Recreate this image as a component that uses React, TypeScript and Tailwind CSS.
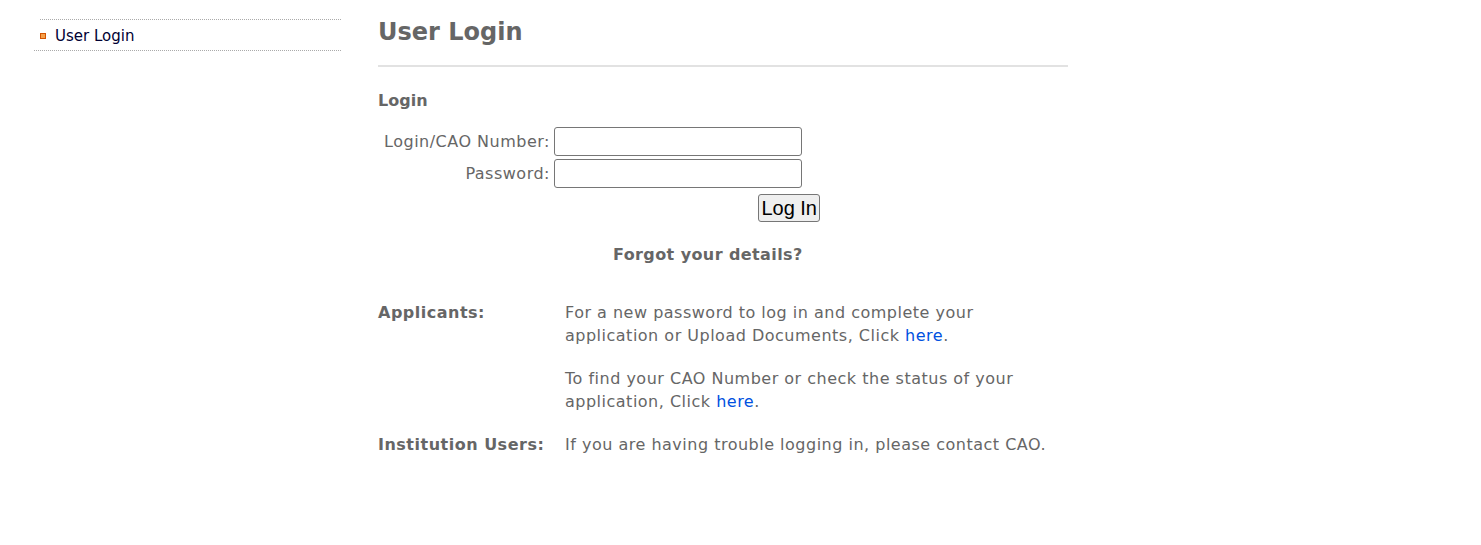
export default function App() {
  return (
    <div className="min-h-[545px] bg-white text-[#666] font-['DejaVu_Sans',sans-serif]">
      <div className="flex">
        {/* sidebar */}
        <aside className="ml-[34px] w-[307px] pt-[19px] shrink-0">
          <ul className="border-b border-dotted border-[#aaa]">
            <li className="ml-[6px] border-t border-dotted border-[#aaa] flex items-center h-[31px] pt-[2px]">
              <span className="w-[6px] h-[6px] bg-[#f5a04a] border border-[#d35400] mr-[9px]" />
              <a href="#" className="text-[15px] text-[#000033] no-underline">
                User Login
              </a>
            </li>
          </ul>
        </aside>

        {/* main */}
        <main className="ml-[37px] w-[690px] tracking-[0.5px]">
          <h1 className="pt-[16px] text-[24px] font-bold leading-[32px] pb-[17px] border-b-2 border-[#e2e2e2] tracking-normal">
            User Login
          </h1>
          <h2 className="mt-[24px] text-[16px] font-bold leading-[20px] tracking-normal">Login</h2>

          <div className="mt-[16px] grid grid-cols-[176px_auto] gap-y-[3px] w-[442px]">
            <label className="text-right pr-[4px] text-[16px] leading-[29px]">Login/CAO Number:</label>
            <input type="text" className="w-[248px] h-[29px] border border-[#767676] rounded-[3px]" />
            <label className="text-right pr-[4px] text-[16px] leading-[29px]">Password:</label>
            <input type="password" className="w-[248px] h-[29px] border border-[#767676] rounded-[3px]" />
          </div>
          <div className="flex justify-end w-[442px] mt-[6px]">
            <button className="h-[28px] px-[2px] border border-[#767676] rounded-[3px] bg-[#efefef] text-black text-[20px] leading-[24px] tracking-normal font-['Liberation_Sans',sans-serif]">
              Log In
            </button>
          </div>

          <p className="mt-[23px] pl-[235px] text-[16px] font-bold leading-[20px] tracking-[0.4px]">Forgot your details?</p>

          <div className="mt-[36px] grid grid-cols-[187px_1fr] text-[16px] leading-[23px] w-[520px]">
            <div className="font-bold">Applicants:</div>
            <div>
              <p>
                For a new password to log in and complete your application or Upload Documents, Click{" "}
                <a href="#" className="text-[#0050e0]">here</a>.
              </p>
              <p className="mt-[20px]">
                To find your CAO Number or check the status of your application, Click{" "}
                <a href="#" className="text-[#0050e0]">here</a>.
              </p>
            </div>
            <div className="font-bold mt-[20px]">Institution Users:</div>
            <div className="mt-[20px] whitespace-nowrap">If you are having trouble logging in, please contact CAO.</div>
          </div>
        </main>
      </div>
    </div>
  );
}
